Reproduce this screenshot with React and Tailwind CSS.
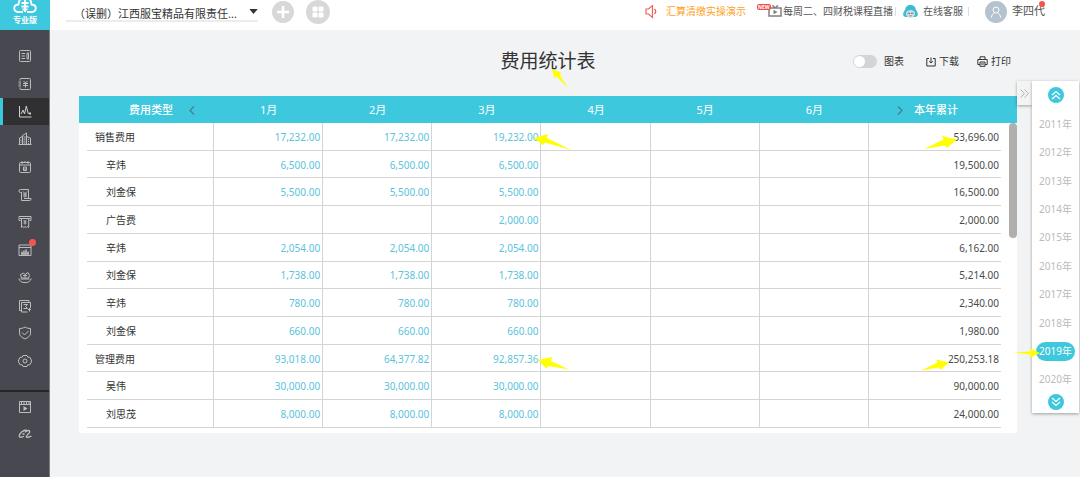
import React from 'react';

const MONTHS = ['1月', '2月', '3月', '4月', '5月', '6月'];

const ROWS = [
  { name: '销售费用', level: 0, months: ['17,232.00', '17,232.00', '19,232.00'], total: '53,696.00' },
  { name: '辛炜', level: 1, months: ['6,500.00', '6,500.00', '6,500.00'], total: '19,500.00' },
  { name: '刘金保', level: 1, months: ['5,500.00', '5,500.00', '5,500.00'], total: '16,500.00' },
  { name: '广告费', level: 1, months: ['', '', '2,000.00'], total: '2,000.00' },
  { name: '辛炜', level: 1, months: ['2,054.00', '2,054.00', '2,054.00'], total: '6,162.00' },
  { name: '刘金保', level: 1, months: ['1,738.00', '1,738.00', '1,738.00'], total: '5,214.00' },
  { name: '辛炜', level: 1, months: ['780.00', '780.00', '780.00'], total: '2,340.00' },
  { name: '刘金保', level: 1, months: ['660.00', '660.00', '660.00'], total: '1,980.00' },
  { name: '管理费用', level: 0, months: ['93,018.00', '64,377.82', '92,857.36'], total: '250,253.18' },
  { name: '吴伟', level: 1, months: ['30,000.00', '30,000.00', '30,000.00'], total: '90,000.00' },
  { name: '刘思茂', level: 1, months: ['8,000.00', '8,000.00', '8,000.00'], total: '24,000.00' },
];

const YEARS = [2011, 2012, 2013, 2014, 2015, 2016, 2017, 2018, 2019, 2020];

function Icon({ children, className = 'size-[14px]', box = '0 0 14 14', width = 1 }) {
  return (
    <svg viewBox={box} className={className} fill="none" stroke="currentColor" strokeWidth={width} aria-hidden="true">
      {children}
    </svg>
  );
}

const NAV = [
  {
    label: '首页',
    icon: (
      <>
        <rect x="1.500" y="1.500" width="11" height="11" rx="1" />
        <path d="M3.500 4.500H7M3.500 7H7M3.500 9.500H7M9 4h1.500v6H9z" />
      </>
    ),
  },
  {
    label: '账簿',
    icon: (
      <>
        <path d="M2 3.500V2.500a1 1 0 0 1 1-1h8.500a1 1 0 0 1 1 1v9a1 1 0 0 1-1 1H3a1 1 0 0 1-1-1v-1M.5 5h2.500M.5 7h2.500M.5 9h2.500" />
        <path d="M5.500 4l2 2 2-2M5 6.500h5M5 8.500h5M7.500 6v4.500" />
      </>
    ),
  },
  {
    label: '统计',
    active: true,
    icon: (
      <>
        <path d="M1.500 2v11h12M3 10l2-4 1.500 4 1.800-8 2 8" />
        <path d="M11 9.500h2" strokeWidth="1.800" />
      </>
    ),
  },
  {
    label: '公司',
    icon: (
      <>
        <path d="M1.500 12.500V6l3-1.500M4.500 12.500V3.500l4-2.500v11.500M8.500 4.500l4 1.500v6.500M.5 12.500h13" />
        <path d="M5.500 5h2M5.500 7h2M5.500 9h2M5.500 11h2M10.500 7v1M10.500 9v1M10.500 11v1M3 7.500v1M3 9.500v1" />
      </>
    ),
  },
  {
    label: '日历',
    icon: (
      <>
        <rect x="1.500" y="2.500" width="11" height="10" rx="1" />
        <path d="M4 1v3M7 1v2M10 1v3M1.500 5h11M5.500 7h3v3.500h-3zM5.500 9h3" />
      </>
    ),
  },
  {
    label: '票据',
    icon: (
      <>
        <path d="M3.500 4V12.500h8a1.500 1.500 0 0 0 1.500-2H6M10.500 10V1.500H2.500a1.500 1.500 0 0 0 0 3h1" />
        <path d="M5 3.500l2 2 2-2M5 6h4M5 8h4M7 5.500V9.500" />
      </>
    ),
  },
  {
    label: '打印票据',
    icon: (
      <>
        <path d="M2.500 5.500H1v-4h12v4h-1.500M2 3.500h10M3.500 3.500v9l1.200-1 1.200 1 1.200-1 1.200 1 1.200-1 1.200 1v-9" />
        <path d="M5.500 6h3M5.500 8h3M7 5.500v4" />
      </>
    ),
  },
  {
    label: '报表',
    dot: true,
    icon: (
      <>
        <path d="M1 2h12v10.500H1zM1 4.500h12" />
        <path d="M3 11h8M4 11V8.500M6 11V7.500M8 11V6.500M10 11V8.500" strokeWidth="1.500" />
      </>
    ),
  },
  {
    label: '财务',
    icon: (
      <>
        <path d="M.8 7.500a6.300 5 0 0 0 12.400 0M2.500 8h9" />
        <path d="M3.500 7l-1-3.500 3-1.500 1.500 1.500 3-2 1.500 3-1 2.500zM5 4.500h4M7 3.500v3" />
      </>
    ),
  },
  {
    label: '单据',
    icon: (
      <>
        <path d="M3 11.500H1.500V1.500h9.500v1.500" />
        <path d="M12.500 9V3.500h-9v9.500h6M5.500 5.500h4l-2 2 2 2h-4M10 10.500h3M11.500 9v3.500" />
      </>
    ),
  },
  {
    label: '安全',
    icon: (
      <>
        <path d="M7 1C5.500 2 3.500 2.500 1.500 2.500v5c0 2.500 2.500 4 5.500 5.500 3-1.500 5.500-3 5.500-5.500v-5C10.500 2.500 8.500 2 7 1z" />
        <path d="M4 6.500l2.500 2.500 4-4" />
      </>
    ),
  },
  {
    label: '设置',
    icon: (
      <>
        <path d="M5 1.500h4l.8 1.700h2L13.400 6v2l-1.600 2.800h-2L9 12.500H5l-.8-1.700h-2L.6 8V6l1.600-2.800h2z" />
        <circle cx="7" cy="7" r="2" />
      </>
    ),
  },
];

const NAV_EXTRA = [
  {
    label: '视频',
    icon: (
      <>
        <path d="M1.500 1.500h11v11h-11zM1.500 4.500h11M3.500 1.500v3M6 1.500v3M8.500 1.500v3M11 1.500v3" />
        <path d="M5.500 6v5l4-2.500z" fill="currentColor" stroke="none" />
      </>
    ),
  },
  {
    label: '阿里',
    icon: (
      <path
        d="M8.500 3C5 3 1.500 6.500 1.200 9c0 1.800 2.800 1.500 4.800.2M4.500 7h2M7 5.200c2.500-2.400 5.500-2.200 4.500.3C10.700 7.300 8.300 8.300 8.300 9.700c0 1 2.500.7 5.200-.7"
        strokeWidth="1.300"
      />
    ),
  },
];

function NavItem({ item }) {
  return (
    <a
      href="#"
      aria-label={item.label}
      className={
        item.active
          ? 'flex flex-1 items-center justify-center border-l-[3px] border-[#3ec8dd] bg-[#303032] pr-[3px] text-[#d0d0d2]'
          : 'flex flex-1 items-center justify-center text-[#bdbdc1]'
      }
    >
      <span className="relative">
        <Icon>{item.icon}</Icon>
        {item.dot && <span className="absolute -top-1 -right-1 size-[7px] rounded-full bg-[#f7554c]" />}
      </span>
    </a>
  );
}

function Sidebar() {
  return (
    <aside className="flex w-[50px] shrink-0 flex-col bg-[#484850]">
      <div className="flex h-[30px] flex-col items-center justify-between bg-[#3ec8dd] pb-[5px] text-white">
        <Icon box="0 0 24 13" className="h-[13px] w-6" width={1.8}>
          <path d="M10 12H6C0 12-.5 5 5.500 4.500 6-1 9-3 12-3s6 2 6.500 7.500C24.500 5 24 12 18 12h-4" />
          <path d="M12 0v12M8.500 3h7M8.500 6.500h7" />
          <path d="M9.500 8.500l2.500 2.500 2.500-2.500" strokeWidth="1.300" />
        </Icon>
        <span className="text-[8px] leading-[10px] font-bold">专业版</span>
      </div>
      <nav className="flex flex-1 flex-col border-r border-[#7c7c82] pt-3">
        <div className="flex h-[333px] flex-col">
          {NAV.map((item) => (
            <NavItem key={item.label} item={item} />
          ))}
        </div>
        <hr className="mt-[15px] mb-px border-t-2 border-[#25252a]" />
        <div className="flex h-[54px] flex-col">
          {NAV_EXTRA.map((item) => (
            <NavItem key={item.label} item={item} />
          ))}
        </div>
      </nav>
    </aside>
  );
}

function TopBar() {
  return (
    <header className="flex h-[30px] items-center bg-white pr-[35px] pb-[7px] pl-4 text-[10px] whitespace-nowrap text-[#555]">
      <div className="relative w-[192px]">
        <select
          aria-label="公司"
          className="h-[21px] w-full appearance-none border-b-2 border-[#ececec] bg-transparent pt-[5px] pl-2 text-[11px] text-[#333] outline-none"
        >
          <option>（误删）江西服宝精品有限责任...</option>
        </select>
        <svg viewBox="0 0 10 6" className="pointer-events-none absolute top-2 right-0 h-[5px] w-[9px]" aria-hidden="true">
          <path d="M0 0h10L5 6z" fill="#333" />
        </svg>
      </div>
      <button aria-label="新增" className="ml-[14px] flex size-[22px] items-center justify-center rounded-full bg-[#d8d8d8] text-white">
        <Icon className="size-3" box="0 0 12 12" width={2.5}>
          <path d="M6 0v12M0 6h12" />
        </Icon>
      </button>
      <button aria-label="应用" className="ml-3 flex size-[24px] items-center justify-center rounded-full bg-[#d8d8d8]">
        <svg viewBox="0 0 12 12" className="size-3" fill="#fff" aria-hidden="true">
          <rect x=".5" y=".5" width="5" height="5" rx="1.200" />
          <rect x="6.500" y=".5" width="5" height="5" rx="1.200" />
          <rect x=".5" y="6.500" width="5" height="5" rx="1.200" />
          <rect x="6.500" y="6.500" width="5" height="5" rx="1.200" />
        </svg>
      </button>

      <a href="#" className="ml-auto flex items-center gap-[9px] text-[#ffa01e]">
        <Icon className="h-[14px] w-3 text-[#f0615a]" box="0 0 12 14" width={1.2}>
          <path d="M1 4h2.500L7.500.6v11.800L3.500 9H1zM9.500 4c1.500 1.500 1.500 3.500 0 5" />
        </Icon>
        汇算清缴实操演示
      </a>
      <a href="#" className="ml-[11px] flex items-center gap-px">
        <span className="relative flex w-[25px] justify-end">
          <Icon className="size-[14px] text-[#808080]" width={1.5}>
            <path d="M1 3h12v8H1zM4.500.3L7 3l3-2.700" />
            <path d="M5.500 4.800v4.400L9.500 7z" fill="currentColor" stroke="none" />
          </Icon>
          <span className="absolute -top-px left-0 rounded-xs bg-[#f0504a] px-px text-[5px] leading-[6px] font-bold text-white">NEW</span>
        </span>
        每周二、四财税课程直播
      </a>
      <span className="ml-[2px] h-[9px] w-px bg-[#ddd]" />
      <a href="#" className="ml-[7px] flex items-center gap-[5px]">
        <svg viewBox="0 0 15 15" className="size-[15px]" aria-hidden="true">
          <path
            d="M7.500.8c3.200 0 5 2.200 5.400 5.200 1.300 1 2.300 4 1.800 5.200-.6 1.300-2.200 1.800-3 1.800H3.300c-.8 0-2.400-.5-3-1.800C-.2 10 .8 7 2.100 6 2.500 3 4.300.8 7.500.8z"
            fill="#38bdd2"
          />
          <path d="M2.800 9C3.500 6.800 5.500 6 7.500 6s4 .8 4.700 3c0 3-2.200 4.800-4.700 4.800S2.800 12 2.800 9z" fill="#c9dde3" />
          <path d="M4.800 9.800l1-1 1 1M8.300 9.800l1-1 1 1" stroke="#4d6170" fill="none" />
          <path d="M6.300 11.800h2.400" stroke="#e0706a" fill="none" />
        </svg>
        在线客服
      </a>
      <span className="ml-[5px] h-[9px] w-px bg-[#ddd]" />
      <a href="#" className="relative ml-4 flex items-center gap-[5px] text-[11px]">
        <span className="flex size-[22px] items-center justify-center rounded-full bg-[#b5c2cf] text-white">
          <Icon className="size-3" box="0 0 12 12">
            <circle cx="6" cy="4" r="3" />
            <path d="M1.500 11.500c0-2.500 1.500-4 3-4.500M10.500 11.500c0-2.500-1.500-4-3-4.500" />
          </Icon>
        </span>
        李四代
        <span className="absolute top-0 right-0 size-[6px] rounded-full bg-[#f7554c]" />
      </a>
    </header>
  );
}

/* Highlight arrows: each is anchored to the element that it points at. */
function Arrow({ className, box, points }) {
  return (
    <svg viewBox={box} className={className} fill="#ffff00" aria-hidden="true">
      <polygon points={points} />
    </svg>
  );
}

function LeftArrow() {
  return (
    <Arrow
      className="absolute top-[11px] left-full z-10 -ml-[6px] h-[16px] w-[37px]"
      box="0 0 37 16"
      points="0,4 14,0 13,4 37,16 11,8.500 9,11"
    />
  );
}

function NearArrow() {
  return (
    <Arrow
      className="absolute top-[12px] left-full z-10 -ml-[2px] h-[13px] w-[31px]"
      box="0 0 31 13"
      points="0,3 14,0 13,4 31,12.500 10,9 9,12"
    />
  );
}

function RightArrow({ className }) {
  return <Arrow className={className} box="0 0 33 13" points="33,3.500 18,0 19.500,3.500 0,13 21,9.500 23,12" />;
}

function Toolbar() {
  return (
    <div className="flex items-center justify-end pr-[6px] text-[10px] text-[#333]">
      <label className="flex items-center gap-[7px]">
        <input
          type="checkbox"
          role="switch"
          className="h-[13px] w-6 appearance-none rounded-full bg-[#d4d4d4] p-px before:block before:size-[11px] before:rounded-full before:bg-white before:content-['']"
        />
        图表
      </label>
      <button className="ml-[22px] flex items-center gap-[3px]">
        <Icon className="size-[10px]" box="0 0 10 10">
          <path d="M3 1.500H.8v7.500h8.400V1.500H7M5 .5v5.500M3.200 4.300L5 6l1.800-1.700" />
        </Icon>
        下载
      </button>
      <button className="ml-[18px] flex items-center gap-[3px]">
        <Icon className="size-[11px]" box="0 0 11 11">
          <path d="M3 3.500V.8h5v2.700M3 8.500H.8v-5h9.400v5H8M3 6h5v4.300H3zM4 8h3" />
        </Icon>
        打印
      </button>
    </div>
  );
}

function ExpenseTable() {
  return (
    <div className="bg-white pb-[5px]">
      <table className="h-[332px] w-full table-fixed border-separate border-spacing-0 text-[10px]">
        <colgroup>
          <col className="w-2" />
          <col className="w-[127px]" />
          {MONTHS.map((m) => (
            <col key={m} />
          ))}
          <col className="w-[132px]" />
          <col className="w-4" />
        </colgroup>
        <thead className="bg-[#3ec8dd] text-[11px] text-white">
          <tr className="h-[27px]">
            <th colSpan={2} className="px-0 pt-[2px] pb-0 font-medium">
              <span className="flex items-center justify-end gap-4 pr-[19px]">
                费用类型
                <button aria-label="前几月" className="text-[#4a7f8c]">
                  <Icon className="h-[9px] w-[6px]" box="0 0 6 9" width={1.2}>
                    <path d="M5 .5l-4 4 4 4" />
                  </Icon>
                </button>
              </span>
            </th>
            {MONTHS.map((m) => (
              <th key={m} className="px-0 pt-[2px] pb-0 font-normal">
                {m}
              </th>
            ))}
            <th colSpan={2} className="px-0 pt-[2px] pb-0 font-medium">
              <span className="flex items-center gap-[11px] pl-7">
                <button aria-label="后几月" className="text-[#4a7f8c]">
                  <Icon className="h-[9px] w-[6px]" box="0 0 6 9" width={1.2}>
                    <path d="M1 .5l4 4-4 4" />
                  </Icon>
                </button>
                本年累计
              </span>
            </th>
          </tr>
        </thead>
        <tbody>
          {ROWS.map((row, i) => (
            <tr key={i} className="h-[27px]">
              <td className="p-0" />
              <td
                className={
                  row.level
                    ? 'border-r border-b border-[#d4d4d4] pt-[2px] pr-0 pb-0 pl-[19px] text-[#333]'
                    : 'border-r border-b border-[#d4d4d4] pt-[2px] pr-0 pb-0 pl-2 text-[#333]'
                }
              >
                {row.name}
              </td>
              {MONTHS.map((m, c) => (
                <td
                  key={m}
                  className="relative border-r border-b border-[#d4d4d4] pt-[2px] pr-[2px] pb-0 pl-0 text-right text-[#5bc3dc]"
                >
                  {row.months[c]}
                  {i === 0 && c === 2 && <LeftArrow />}
                  {i === 8 && c === 2 && <NearArrow />}
                </td>
              ))}
              <td className="relative border-b border-[#d4d4d4] pt-[2px] pr-[2px] pb-0 pl-0 text-right text-[#4a4a4a]">
                {row.total}
                {i === 0 && <RightArrow className="absolute top-[13px] right-[44px] h-[13px] w-[33px]" />}
                {i === 8 && <RightArrow className="absolute top-[14px] right-[52px] h-[12px] w-[28px]" />}
              </td>
              {i === 0 && (
                <td rowSpan={ROWS.length} className="p-0 align-top">
                  <div className="ml-auto h-[115px] w-2 rounded-full bg-[#b0afae]" />
                </td>
              )}
            </tr>
          ))}
        </tbody>
      </table>
    </div>
  );
}

function YearPanel() {
  return (
    <aside className="mt-[51px] mr-px flex items-start text-[10px]">
      <button
        aria-label="收起"
        className="flex h-6 w-[15px] items-center justify-center bg-[#f4f4f4] text-[#b0b0b0] shadow-[0_1px_3px_rgba(0,0,0,0.35)]"
      >
        <Icon className="size-[9px]" box="0 0 9 9">
          <path d="M.5.5l4 4-4 4M4.500.5l4 4-4 4" />
        </Icon>
      </button>
      <div className="relative flex w-[47px] flex-col items-center bg-white pt-[6px] pb-[3px] shadow-[0_1px_3px_rgba(0,0,0,0.35)]">
        <button aria-label="更早年份" className="flex size-4 items-center justify-center rounded-full bg-[#3ec8dd] text-white">
          <Icon className="size-[10px]" box="0 0 10 10" width={1.3}>
            <path d="M1 5l4-3.500L9 5M1 9l4-3.500L9 9" />
          </Icon>
        </button>
        <ul className="mt-[7px] flex h-[284px] w-full flex-col text-[#bbb]">
          {YEARS.map((y) => (
            <li key={y} className="flex flex-1 items-center justify-center">
              {y === 2019 ? (
                <button aria-pressed="true" className="relative flex h-[19px] w-[39px] items-center justify-center rounded-full bg-[#3ec8dd] text-white">
                  {y}年
                  <Arrow
                    className="absolute top-[6px] right-[35px] h-[10px] w-[27px]"
                    box="0 0 27 10"
                    points="27,5 16.500,0 18,3.500 0,4.500 18,6.500 16.500,10"
                  />
                </button>
              ) : (
                <button>{y}年</button>
              )}
            </li>
          ))}
        </ul>
        <button aria-label="更晚年份" className="flex size-4 items-center justify-center rounded-full bg-[#3ec8dd] text-white">
          <Icon className="size-[10px]" box="0 0 10 10" width={1.3}>
            <path d="M1 1l4 3.500L9 1M1 5l4 3.500L9 5" />
          </Icon>
        </button>
      </div>
    </aside>
  );
}

export default function App() {
  return (
    <div className="flex min-h-screen bg-[#f2f3f5] font-['Noto_Sans','Noto_Sans_CJK_SC',sans-serif]">
      <Sidebar />
      <div className="flex min-w-0 flex-1 flex-col">
        <TopBar />
        <div className="flex flex-1 items-start pl-[29px]">
          <main className="min-w-0 flex-1">
            <div className="grid h-[66px] grid-cols-[1fr_auto_1fr] items-center pb-[3px]">
              <span />
              <h1 className="relative text-[19px] text-[#333]">
                费用统计表
                <Arrow
                  className="absolute top-[22px] left-[52px] h-[19px] w-[16px]"
                  box="0 0 16 19"
                  points="0,0 10,4 7.500,5.500 16,19 4.500,7.500 2,9"
                />
              </h1>
              <Toolbar />
            </div>
            <ExpenseTable />
          </main>
          <YearPanel />
        </div>
      </div>
    </div>
  );
}
